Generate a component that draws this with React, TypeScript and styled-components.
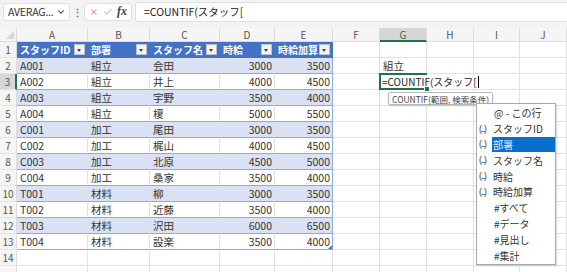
import * as React from 'react'
import styled, { createGlobalStyle, css } from 'styled-components'
import { X, Check, ChevronDown } from 'lucide-react'

const GlobalStyle = createGlobalStyle`
  html, body {
    margin: 0;
    padding: 0;
    background: #ffffff;
    overflow: hidden;
  }
  body {
    font-family: "Noto Sans CJK JP", "Noto Sans", sans-serif;
    color: #262626;
  }
`

const COLS = [17, 71, 62, 70, 55, 58, 47, 47, 47, 46, 47]
const LETTERS = ['A', 'B', 'C', 'D', 'E', 'F', 'G', 'H', 'I', 'J']
const HEADERS = ['スタッフID', '部署', 'スタッフ名', '時給', '時給加算']

const DATA: [string, string, string, number, number][] = [
  ['A001', '組立', '会田', 3000, 3500],
  ['A002', '組立', '井上', 4000, 4500],
  ['A003', '組立', '宇野', 3500, 4000],
  ['A004', '組立', '榎', 5000, 5500],
  ['C001', '加工', '尾田', 3000, 3500],
  ['C002', '加工', '梶山', 4000, 4500],
  ['C003', '加工', '北原', 4500, 5000],
  ['C004', '加工', '桑家', 3500, 4000],
  ['T001', '材料', '柳', 3000, 3500],
  ['T002', '材料', '近藤', 3500, 4000],
  ['T003', '材料', '沢田', 6000, 6500],
  ['T004', '材料', '設楽', 3500, 4000],
]

const MENU: { icon: 'col' | 'spec' | 'at'; label: string; active?: boolean }[] = [
  { icon: 'at', label: '@ - この行' },
  { icon: 'col', label: 'スタッフID' },
  { icon: 'col', label: '部署', active: true },
  { icon: 'col', label: 'スタッフ名' },
  { icon: 'col', label: '時給' },
  { icon: 'col', label: '時給加算' },
  { icon: 'spec', label: '#すべて' },
  { icon: 'spec', label: '#データ' },
  { icon: 'spec', label: '#見出し' },
  { icon: 'spec', label: '#集計' },
]

const Toolbar = styled.div`
  display: flex;
  align-items: center;
  height: 23px;
  padding: 0 0 0 3px;
  background: #f3f3f3;
  box-sizing: border-box;
`

const NameBox = styled.div`
  display: flex;
  align-items: center;
  justify-content: space-between;
  width: 67px;
  height: 18px;
  padding: 0 3px 0 4px;
  box-sizing: border-box;
  background: #fff;
  border: 1px solid #e0e0e0;
  border-radius: 3px;
  font-size: 10.5px;
  color: #333;
  letter-spacing: -0.2px;
`

const Grip = styled.div`
  width: 14px;
  text-align: center;
  color: #777;
  font-size: 11px;
  font-weight: bold;
`

const ActionGroup = styled.div`
  display: flex;
  align-items: center;
  gap: 4px;
  width: 48px;
  height: 18px;
  padding: 0 4px;
  box-sizing: border-box;
  background: #fff;
  border: 1px solid #e0e0e0;
  border-radius: 3px;
`

const Fx = styled.span`
  font-family: "Liberation Serif", serif;
  font-style: italic;
  font-weight: bold;
  font-size: 12px;
  color: #444;
  margin-left: 1px;
`

const FormulaInput = styled.div`
  flex: 1;
  display: flex;
  align-items: center;
  height: 18px;
  margin-left: 3px;
  padding-left: 8px;
  background: #fff;
  border: 1px solid #e0e0e0;
  border-right: none;
  border-radius: 3px 0 0 3px;
  font-size: 10.5px;
  color: #222;
`

const Spacer = styled.div`
  height: 5px;
  background: #f3f3f3;
`

const Sheet = styled.div`
  position: relative;
  display: grid;
  grid-template-columns: ${COLS.map(c => `${c}px`).join(' ')};
  grid-template-rows: 14px;
  grid-auto-rows: 16px;
  background: #fff;
`

const Corner = styled.div`
  position: relative;
  background: #f5f5f5;
  border-right: 1px solid #dcdcdc;
  border-bottom: 1px solid #dcdcdc;
  &::after {
    content: '';
    position: absolute;
    right: 2px;
    bottom: 2px;
    border-left: 8px solid transparent;
    border-bottom: 8px solid #d6d6d6;
  }
`

const ColHead = styled.div<{ $active?: boolean }>`
  display: flex;
  align-items: center;
  justify-content: center;
  background: #f5f5f5;
  border-right: 1px solid #dcdcdc;
  border-bottom: 1px solid #dcdcdc;
  box-sizing: border-box;
  font-size: 10px;
  color: #555;
  ${p => p.$active && css`
    background: #d6d6d6;
    color: #217346;
    border-bottom: 2px solid #217346;
  `}
`

const RowHead = styled.div<{ $active?: boolean }>`
  display: flex;
  align-items: center;
  justify-content: center;
  background: #f5f5f5;
  border-right: 1px solid #dcdcdc;
  border-bottom: 1px solid #e4e4e4;
  box-sizing: border-box;
  font-size: 10px;
  color: #555;
  ${p => p.$active && css`
    background: #d6d6d6;
    color: #217346;
    border-right: 2px solid #217346;
  `}
`

type CellKind = 'plain' | 'band' | 'row' | 'head'

const Cell = styled.div<{ $kind: CellKind; $right?: boolean; $edge?: boolean }>`
  position: relative;
  display: flex;
  align-items: center;
  justify-content: ${p => (p.$right ? 'flex-end' : 'flex-start')};
  padding: 0 2px 0 3px;
  box-sizing: border-box;
  border-right: 1px solid #e1e1e1;
  border-bottom: 1px solid #e1e1e1;
  font-size: 10.5px;
  white-space: nowrap;
  color: #333;
  ${p => p.$kind === 'head' && css`
    background: #4472c4;
    color: #fff;
    font-weight: 600;
    font-size: 10px;
    border-right-color: #4472c4;
    border-bottom-color: #4472c4;
    justify-content: space-between;
  `}
  ${p => p.$kind === 'band' && css`
    background: #d9e1f2;
    border-right-color: #d9e1f2;
    border-bottom-color: #8ea9db;
  `}
  ${p => p.$kind === 'row' && css`
    border-bottom-color: #8ea9db;
  `}
  ${p => p.$edge && p.$kind !== 'head' && css`
    border-right-color: #8ea9db;
  `}
`

const FilterButton = styled.span`
  position: relative;
  flex: none;
  width: 9px;
  height: 9px;
  background: #f3f3f3;
  border: 1px solid #c0c0c0;
  &::after {
    content: '';
    position: absolute;
    left: 2px;
    top: 4px;
    border-left: 2.5px solid transparent;
    border-right: 2.5px solid transparent;
    border-top: 3px solid #444;
  }
`

const ResizeGrip = styled.span`
  position: absolute;
  right: 0;
  bottom: 0;
  border-left: 4px solid transparent;
  border-bottom: 4px solid #4472c4;
`

/* the entry text runs over the cell's right edge, so the frame has no right side */
const ActiveCell = styled.div`
  position: relative;
  z-index: 2;
  display: flex;
  align-items: center;
  padding-left: 1px;
  border: 2px solid #217346;
  border-right: none;
  margin: -1px 0 0 -1px;
  white-space: nowrap;
  &::after {
    content: '';
    position: absolute;
    right: -3px;
    bottom: -4px;
    width: 4px;
    height: 4px;
    background: #217346;
    border: 1px solid #fff;
  }
`

const Entry = styled.span`
  display: flex;
  align-items: center;
  height: 12px;
  padding-right: 1px;
  background: #fff;
  font-size: 10px;
  color: #222;
`

const Caret = styled.span`
  display: inline-block;
  width: 1px;
  height: 12px;
  margin-left: 1px;
  background: #000;
`

const Tooltip = styled.div`
  position: absolute;
  left: 388px;
  top: 64px;
  z-index: 3;
  height: 11px;
  padding: 0 3px;
  display: flex;
  align-items: center;
  background: #fff;
  border: 1px solid #b8b8b8;
  border-radius: 2px;
  box-shadow: 0 1px 2px rgba(0, 0, 0, 0.15);
  font-size: 8.5px;
  color: #444;
  white-space: nowrap;
`

const Menu = styled.div`
  position: absolute;
  left: 476px;
  top: 75px;
  z-index: 3;
  width: 80px;
  padding: 1px 0;
  box-sizing: border-box;
  background: #fff;
  border: 1px solid #a8a8a8;
  box-shadow: 1px 1px 2px rgba(0, 0, 0, 0.15);
`

const MenuItem = styled.div<{ $indent: boolean }>`
  display: flex;
  align-items: center;
  height: 15.8px;
  padding-left: ${p => (p.$indent ? 16 : 2)}px;
  font-size: 10px;
  color: #333;
  white-space: nowrap;
`

const ColIcon = styled.span`
  flex: none;
  width: 13px;
  font-family: "Liberation Sans", sans-serif;
  font-size: 8.5px;
  letter-spacing: -1.2px;
  color: #333;
`

const MenuLabel = styled.span<{ $active?: boolean }>`
  flex: 1;
  display: flex;
  align-items: center;
  height: 100%;
  padding-left: 1px;
  ${p => p.$active && css`
    background: #0a6ecf;
    color: #dfeeff;
  `}
`

function Header() {
  return (
    <Toolbar>
      <NameBox>
        <span>AVERAG...</span>
        <ChevronDown size={10} strokeWidth={2.5} color="#333" />
      </NameBox>
      <Grip>⋮</Grip>
      <ActionGroup>
        <X size={12} strokeWidth={1.6} color="#e0262f" />
        <Check size={12} strokeWidth={1.6} color="#2b8a3e" />
        <Fx>fx</Fx>
      </ActionGroup>
      <FormulaInput>=COUNTIF(スタッフ[</FormulaInput>
    </Toolbar>
  )
}

function tableCell(r: number, c: number) {
  // r is sheet row (1-based), c is column index 0..4
  const key = `${r}-${c}`
  const edge = c === 4
  if (r === 1) {
    return (
      <Cell key={key} $kind="head" $edge={edge}>
        <span>{HEADERS[c]}</span>
        <FilterButton />
      </Cell>
    )
  }
  const row = DATA[r - 2]
  const value = row[c]
  const kind: CellKind = r % 2 === 0 ? 'band' : 'row'
  return (
    <Cell key={key} $kind={kind} $right={c >= 3} $edge={edge}>
      {value}
      {r === 13 && edge && <ResizeGrip />}
    </Cell>
  )
}

function SheetBody() {
  const cells: React.ReactNode[] = []
  cells.push(<Corner key="corner" />)
  LETTERS.forEach(l => cells.push(<ColHead key={`h-${l}`} $active={l === 'G'}>{l}</ColHead>))

  for (let r = 1; r <= 15; r++) {
    // row 15 is only a sliver at the bottom edge, its number is out of view
    cells.push(<RowHead key={`r-${r}`} $active={r === 3}>{r < 15 ? r : ''}</RowHead>)
    for (let c = 0; c < LETTERS.length; c++) {
      const key = `${r}-${c}`
      if (r <= 13 && c < 5) {
        cells.push(tableCell(r, c))
      } else if (r === 3 && c === 6) {
        cells.push(
          <ActiveCell key={key}>
            <Entry>
              =COUNTIF(スタッフ[<Caret />
            </Entry>
          </ActiveCell>
        )
      } else if (r === 2 && c === 6) {
        cells.push(<Cell key={key} $kind="plain">組立</Cell>)
      } else {
        cells.push(<Cell key={key} $kind="plain" />)
      }
    }
  }

  return (
    <Sheet>
      {cells}
      <Tooltip>COUNTIF(範囲, 検索条件)</Tooltip>
      <Menu>
        {MENU.map(item => (
          <MenuItem key={item.label} $indent={item.icon !== 'col'}>
            {item.icon === 'col' && <ColIcon>(...)</ColIcon>}
            <MenuLabel $active={item.active}>{item.label}</MenuLabel>
          </MenuItem>
        ))}
      </Menu>
    </Sheet>
  )
}

export default function App() {
  return (
    <>
      <GlobalStyle />
      <Header />
      <Spacer />
      <SheetBody />
    </>
  )
}
